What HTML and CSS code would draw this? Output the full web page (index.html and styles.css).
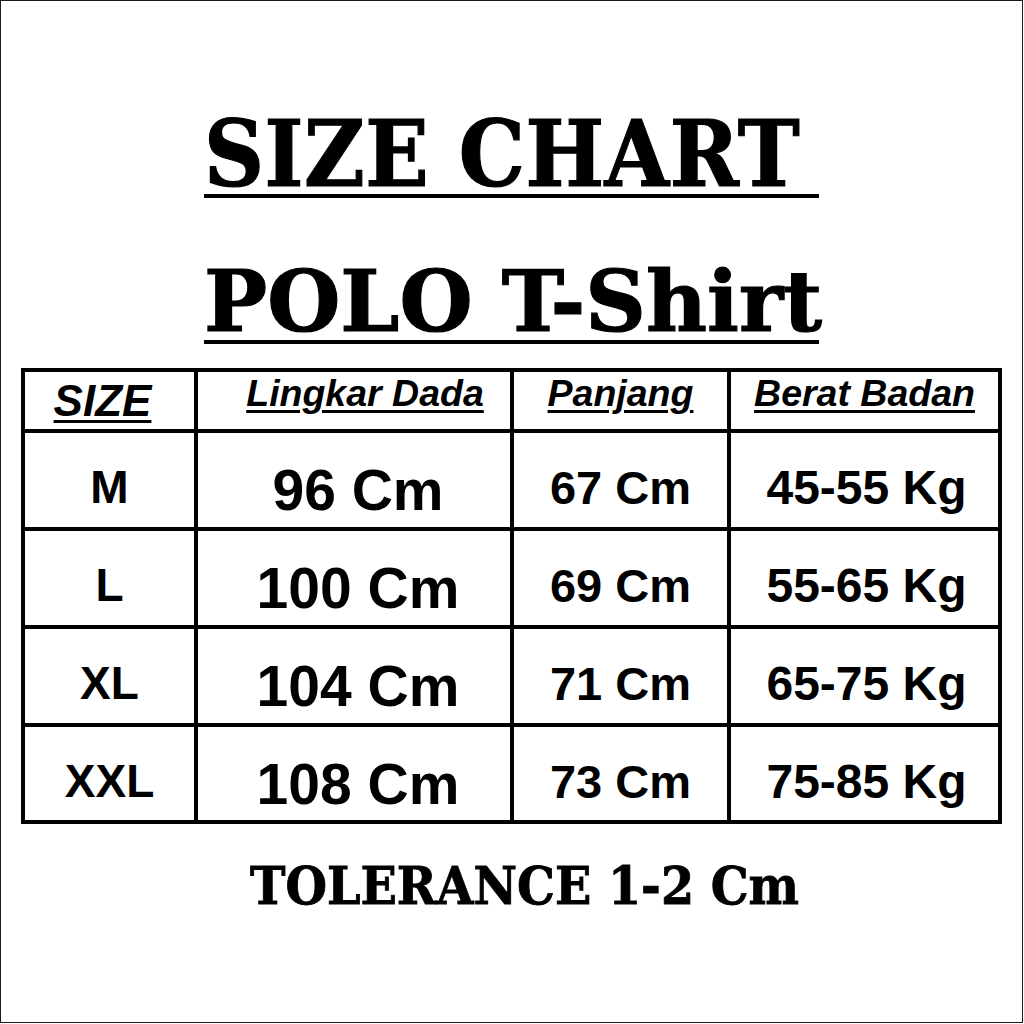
FILE: index.html
```html
<!doctype html>
<html lang="id">
<head>
  <meta charset="UTF-8"/>
  <meta name="viewport" content="width=device-width, initial-scale=1.0"/>
  <title>Size Chart POLO T-Shirt</title>
  <link rel="stylesheet" href="styles.css">
</head>
<body>
  <div class="frame">
    <div class="heading">
      <h1 class="title title-main">SIZE CHART</h1>
      <h2 class="title title-sub">POLO T-Shirt</h2>
    </div>

    <table class="chart">
      <thead>
        <tr>
          <th class="col-size"><span class="head-size">SIZE</span></th>
          <th class="col-chest"><span class="head">Lingkar Dada</span></th>
          <th class="col-length"><span class="head">Panjang</span></th>
          <th class="col-weight"><span class="head">Berat Badan</span></th>
        </tr>
      </thead>
      <tbody>
        <tr>
          <td class="size">M</td>
          <td class="chest">96 Cm</td>
          <td class="length">67 Cm</td>
          <td class="weight">45-55 Kg</td>
        </tr>
        <tr>
          <td class="size">L</td>
          <td class="chest">100 Cm</td>
          <td class="length">69 Cm</td>
          <td class="weight">55-65 Kg</td>
        </tr>
        <tr>
          <td class="size">XL</td>
          <td class="chest">104 Cm</td>
          <td class="length">71 Cm</td>
          <td class="weight">65-75 Kg</td>
        </tr>
        <tr class="last">
          <td class="size">XXL</td>
          <td class="chest">108 Cm</td>
          <td class="length">73 Cm</td>
          <td class="weight">75-85 Kg</td>
        </tr>
      </tbody>
    </table>

    <p class="tolerance">TOLERANCE 1-2 Cm</p>
  </div>
</body>
</html>
```

FILE: styles.css
```css
body {
  margin: 0;
  padding: 0;
  background: #fff;
  color: #000;
}

.frame {
  box-sizing: border-box;
  width: 1023px;
  height: 1023px;
  border: 1px solid #1a1a1a;
  padding-top: 113px;
}

.heading {
  width: 615px;
  margin: 0 auto;
}

.title {
  margin: 0;
  font-family: "DejaVu Serif", "Liberation Serif", serif;
  font-weight: bold;
  -webkit-text-stroke: 1.2px #000;
  border-bottom: 4px solid #000;
  white-space: nowrap;
}

.title-main {
  font-size: 92.5px;
  line-height: 80px;
  font-stretch: condensed;
  letter-spacing: 0.5px;
}

.title-sub {
  font-size: 84px;
  line-height: 76px;
  margin-top: 66px;
}

/* table: black background shows through the spacing as grid lines */
.chart {
  margin: 24px 0 0 20px;
  border-spacing: 4px;
  background: #000;
  font-family: "Liberation Sans", Arial, sans-serif;
  font-weight: bold;
}

.chart th,
.chart td {
  background: #fff;
  padding: 0;
  text-align: center;
  vertical-align: top;
  line-height: 1;
  white-space: nowrap;
}

.chart th {
  height: 57px;
}

.chart td {
  height: 94px;
  box-sizing: border-box;
  padding-top: 31px;
}

.chart .last td {
  height: 93px;
}

.col-size { width: 169px; }
.col-chest { width: 312px; }
.col-length { width: 213px; }
.col-weight { width: 267px; }

.head,
.head-size {
  display: inline-block;
  font-style: italic;
  text-decoration: underline;
  text-decoration-thickness: 3px;
  text-underline-offset: 4px;
}

.head {
  font-size: 37.5px;
  margin-top: 3px;
}

.head-size {
  font-size: 44px;
  margin-top: 7px;
  margin-right: 14px;
}

.col-chest .head {
  margin-left: 22px;
}

.chart td.size {
  font-size: 46px;
}

.chart td.chest {
  font-size: 57px;
  padding-top: 29px;
  padding-left: 8px;
}

.chart td.length {
  font-size: 47px;
}

.chart td.weight {
  font-size: 48px;
  padding-left: 4px;
}

.tolerance {
  margin: 35px 0 0;
  padding-left: 26px;
  text-align: center;
  font-family: "DejaVu Serif", "Liberation Serif", serif;
  font-weight: bold;
  font-stretch: condensed;
  -webkit-text-stroke: 0.8px #000;
  font-size: 53px;
  line-height: 1;
}
```
